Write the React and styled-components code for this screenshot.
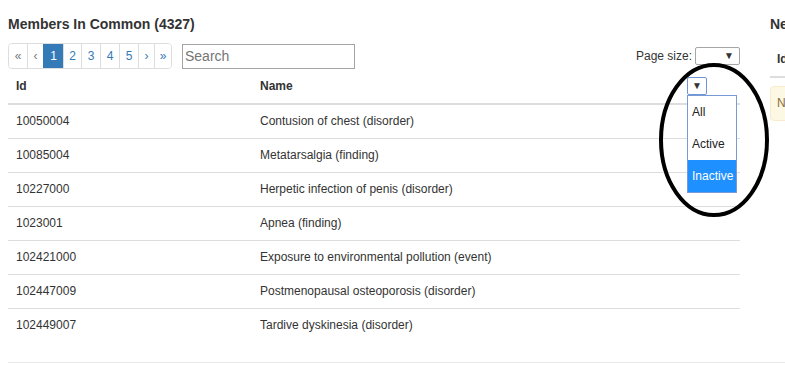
import React from "react";
import styled, { createGlobalStyle } from "styled-components";

const GlobalStyle = createGlobalStyle`
  html, body { margin: 0; padding: 0; background: #fff; }
  body {
    width: 785px;
    height: 382px;
    overflow: hidden;
    font-family: "Liberation Sans", Arial, sans-serif;
    color: #333;
    font-size: 12px;
  }
`;

const Page = styled.div`
  position: relative;
  width: 785px;
  height: 382px;
  overflow: hidden;
  padding-top: 14px;
  box-sizing: border-box;
`;

const Columns = styled.div`
  display: flex;
  gap: 30px;
  padding-left: 8px;
`;

const LeftCol = styled.div`
  width: 732px;
  flex: none;
`;

const RightCol = styled.div`
  width: 200px;
  flex: none;
`;

const Title = styled.div`
  font-size: 14px;
  font-weight: bold;
  line-height: 20px;
  height: 20px;
  color: #333;
  white-space: nowrap;
  margin-bottom: ${(p) => p.$mb || 9}px;
`;

const Toolbar = styled.div`
  display: flex;
  align-items: center;
  height: 26px;
`;

const Pager = styled.div`
  display: flex;
  height: 26px;
  border: 1px solid #ddd;
  border-radius: 4px;
  box-sizing: border-box;
  overflow: hidden;
`;

const PageItem = styled.span`
  width: ${(p) => p.$w}px;
  display: flex;
  align-items: center;
  justify-content: center;
  font-size: 12px;
  line-height: 24px;
  border-left: ${(p) => (p.$first ? "none" : "1px solid #ddd")};
  color: ${(p) => (p.$active ? "#fff" : p.$disabled ? "#777" : "#337ab7")};
  background: ${(p) => (p.$active ? "#337ab7" : "#fff")};
  ${(p) => (p.$active ? "border-left-color: #337ab7;" : "")}
  box-sizing: border-box;
`;

const SearchInput = styled.input`
  margin-left: 10px;
  width: 173px;
  height: 25px;
  box-sizing: border-box;
  border: 1px solid #a3a3a3;
  padding: 0 2px;
  font-family: "Liberation Sans", Arial, sans-serif;
  font-size: 14px;
  color: #333;
  outline: none;
  &::placeholder { color: #757575; }
`;

const Spacer = styled.div`
  flex: 1;
`;

const SizeLabel = styled.span`
  font-size: 12px;
  color: #333;
  margin-right: 3px;
`;

const FakeSelect = styled.div`
  width: ${(p) => p.$w}px;
  height: ${(p) => p.$h}px;
  box-sizing: border-box;
  border: 1px solid ${(p) => (p.$focus ? "#6f95d8" : "#a6a6a6")};
  border-radius: 2px;
  display: flex;
  align-items: center;
  justify-content: ${(p) => (p.$center ? "center" : "flex-end")};
  padding-right: ${(p) => (p.$center ? 0 : 5)}px;
  background: #fff;
  position: relative;
`;

const Arrow = styled.span`
  font-size: 10px;
  line-height: 1;
  color: #333;
`;

const Table = styled.table`
  width: 732px;
  border-collapse: collapse;
  border-spacing: 0;
  table-layout: fixed;
`;

const Th = styled.th`
  text-align: left;
  font-weight: bold;
  font-size: 12px;
  line-height: 17px;
  padding: 9px 8px 7px;
  border-bottom: 2px solid #ddd;
  vertical-align: top;
  height: 17px;
  width: ${(p) => p.$w}px;
  box-sizing: content-box;
`;

const FilterTh = styled(Th)`
  padding-top: 8px;
  padding-bottom: 8px;
`;

const Td = styled.td`
  font-size: 12px;
  line-height: 17px;
  padding: 8px;
  border-top: 1px solid #ddd;
  color: #333;
  white-space: nowrap;
`;

const FilterWrap = styled.div`
  position: relative;
  width: 20px;
  height: 18px;
`;

const DropList = styled.div`
  position: absolute;
  top: 18px;
  left: 0;
  width: 50px;
  border: 1px solid #7a9ad6;
  background: #fff;
  box-sizing: border-box;
  z-index: 2;
`;

const Option = styled.div`
  height: 32px;
  line-height: 32px;
  padding-left: 4px;
  font-size: 12px;
  font-weight: normal;
  white-space: nowrap;
  overflow: hidden;
  color: ${(p) => (p.$selected ? "#fff" : "#222")};
  background: ${(p) => (p.$selected ? "#1e90ff" : "#fff")};
`;

const RightTable = styled.div`
  margin-top: 7px;
`;

const RightHead = styled.div`
  padding: 8px 7px;
  font-weight: bold;
  font-size: 12px;
  line-height: 17px;
  border-bottom: 2px solid #ddd;
`;

const Alert = styled.div`
  margin-top: 8px;
  background: #fcf8e3;
  border: 1px solid #faebcc;
  border-radius: 4px;
  color: #8a6d3b;
  padding: 8px 6px;
  font-size: 12px;
  line-height: 17px;
  white-space: nowrap;
`;

const Rule = styled.div`
  margin: 20px 0 0 8px;
  border-top: 1px solid #e8e8e8;
`;

const Annotation = styled.svg`
  position: absolute;
  left: 656px;
  top: 60px;
  z-index: 3;
  pointer-events: none;
`;

const pages = [
  { label: "«", w: 18, disabled: true },
  { label: "‹", w: 16, disabled: true },
  { label: "1", w: 20, active: true },
  { label: "2", w: 18 },
  { label: "3", w: 19 },
  { label: "4", w: 19 },
  { label: "5", w: 19 },
  { label: "›", w: 16 },
  { label: "»", w: 17 },
];

const rows = [
  ["10050004", "Contusion of chest (disorder)"],
  ["10085004", "Metatarsalgia (finding)"],
  ["10227000", "Herpetic infection of penis (disorder)"],
  ["1023001", "Apnea (finding)"],
  ["102421000", "Exposure to environmental pollution (event)"],
  ["102447009", "Postmenopausal osteoporosis (disorder)"],
  ["102449007", "Tardive dyskinesia (disorder)"],
];

export default function App() {
  return (
    <Page>
      <GlobalStyle />
      <Columns>
        <LeftCol>
          <Title>Members In Common (4327)</Title>
          <Toolbar>
            <Pager>
              {pages.map((p, i) => (
                <PageItem
                  key={i}
                  $w={p.w}
                  $first={i === 0}
                  $active={p.active}
                  $disabled={p.disabled}
                >
                  {p.label}
                </PageItem>
              ))}
            </Pager>
            <SearchInput placeholder="Search" />
            <Spacer />
            <SizeLabel>Page size:</SizeLabel>
            <FakeSelect $w={45} $h={18}>
              <Arrow>▼</Arrow>
            </FakeSelect>
          </Toolbar>
          <Table>
            <thead>
              <tr>
                <Th $w={228}>Id</Th>
                <Th $w={411}>Name</Th>
                <FilterTh $w={45}>
                  <FilterWrap>
                    <FakeSelect $w={20} $h={18} $focus $center>
                      <Arrow>▼</Arrow>
                    </FakeSelect>
                    <DropList>
                      <Option>All</Option>
                      <Option>Active</Option>
                      <Option $selected>Inactive</Option>
                    </DropList>
                  </FilterWrap>
                </FilterTh>
              </tr>
            </thead>
            <tbody>
              {rows.map(([id, name]) => (
                <tr key={id}>
                  <Td>{id}</Td>
                  <Td>{name}</Td>
                  <Td />
                </tr>
              ))}
            </tbody>
          </Table>
        </LeftCol>
        <RightCol>
          <Title $mb={0}>New Members</Title>
          <RightTable>
            <RightHead>Id</RightHead>
            <Alert>No members</Alert>
          </RightTable>
        </RightCol>
      </Columns>
      <Rule />
      <Annotation width="116" height="160" viewBox="0 0 116 160">
        <ellipse cx="58" cy="80" rx="53" ry="75" fill="none" stroke="#000" strokeWidth="4" />
      </Annotation>
    </Page>
  );
}
